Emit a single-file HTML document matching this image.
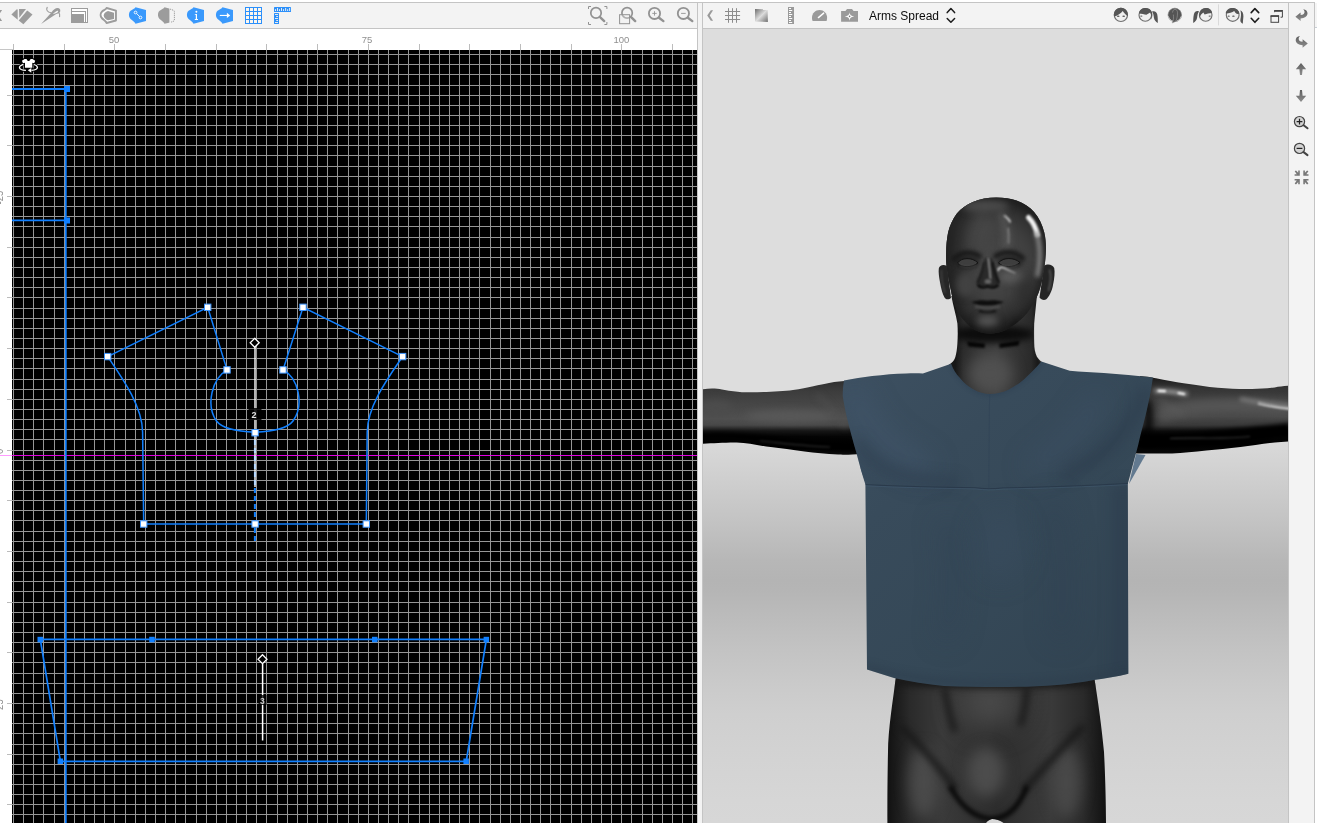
<!DOCTYPE html>
<html><head><meta charset="utf-8"><title>Pattern</title>
<style>
html,body{margin:0;padding:0;background:#fff;overflow:hidden;}
body{width:1317px;height:823px;position:relative;font-family:"Liberation Sans",sans-serif;}
svg{position:absolute;left:0;top:0;display:block;}
text{font-family:"Liberation Sans",sans-serif;}
</style></head>
<body>
<svg width="1317" height="823" viewBox="0 0 1317 823">
<!-- base chrome -->
<rect x="0" y="0" width="1317" height="823" fill="#ffffff"/>
<!-- left toolbar -->
<rect x="0" y="3" width="697" height="25" fill="#f3f3f3"/>
<rect x="0" y="2" width="1315" height="1" fill="#c4c4c4"/>
<rect x="0" y="28" width="697" height="1" fill="#c4c4c4"/>
<!-- rulers -->
<rect x="0" y="49" width="13" height="1" fill="#c6c6c6"/>
<!-- 2D canvas -->
<rect x="12" y="50" width="685" height="773" fill="#000"/>
<g shape-rendering="crispEdges"><path d="M13 50h1v773h-1zM23 50h1v773h-1zM33 50h1v773h-1zM43 50h1v773h-1zM54 50h1v773h-1zM64 50h1v773h-1zM74 50h1v773h-1zM84 50h1v773h-1zM94 50h1v773h-1zM104 50h1v773h-1zM114 50h1v773h-1zM125 50h1v773h-1zM135 50h1v773h-1zM145 50h1v773h-1zM155 50h1v773h-1zM165 50h1v773h-1zM175 50h1v773h-1zM185 50h1v773h-1zM196 50h1v773h-1zM206 50h1v773h-1zM216 50h1v773h-1zM226 50h1v773h-1zM236 50h1v773h-1zM246 50h1v773h-1zM256 50h1v773h-1zM266 50h1v773h-1zM277 50h1v773h-1zM287 50h1v773h-1zM297 50h1v773h-1zM307 50h1v773h-1zM317 50h1v773h-1zM327 50h1v773h-1zM337 50h1v773h-1zM348 50h1v773h-1zM358 50h1v773h-1zM368 50h1v773h-1zM378 50h1v773h-1zM388 50h1v773h-1zM398 50h1v773h-1zM408 50h1v773h-1zM419 50h1v773h-1zM429 50h1v773h-1zM439 50h1v773h-1zM449 50h1v773h-1zM459 50h1v773h-1zM469 50h1v773h-1zM479 50h1v773h-1zM490 50h1v773h-1zM500 50h1v773h-1zM510 50h1v773h-1zM520 50h1v773h-1zM530 50h1v773h-1zM540 50h1v773h-1zM550 50h1v773h-1zM560 50h1v773h-1zM571 50h1v773h-1zM581 50h1v773h-1zM591 50h1v773h-1zM601 50h1v773h-1zM611 50h1v773h-1zM621 50h1v773h-1zM631 50h1v773h-1zM642 50h1v773h-1zM652 50h1v773h-1zM662 50h1v773h-1zM672 50h1v773h-1zM682 50h1v773h-1zM692 50h1v773h-1zM12 54h685v1h-685zM12 64h685v1h-685zM12 74h685v1h-685zM12 85h685v1h-685zM12 95h685v1h-685zM12 105h685v1h-685zM12 115h685v1h-685zM12 125h685v1h-685zM12 135h685v1h-685zM12 145h685v1h-685zM12 155h685v1h-685zM12 166h685v1h-685zM12 176h685v1h-685zM12 186h685v1h-685zM12 196h685v1h-685zM12 206h685v1h-685zM12 216h685v1h-685zM12 226h685v1h-685zM12 237h685v1h-685zM12 247h685v1h-685zM12 257h685v1h-685zM12 267h685v1h-685zM12 277h685v1h-685zM12 287h685v1h-685zM12 297h685v1h-685zM12 308h685v1h-685zM12 318h685v1h-685zM12 328h685v1h-685zM12 338h685v1h-685zM12 348h685v1h-685zM12 358h685v1h-685zM12 368h685v1h-685zM12 379h685v1h-685zM12 389h685v1h-685zM12 399h685v1h-685zM12 409h685v1h-685zM12 419h685v1h-685zM12 429h685v1h-685zM12 439h685v1h-685zM12 450h685v1h-685zM12 460h685v1h-685zM12 470h685v1h-685zM12 480h685v1h-685zM12 490h685v1h-685zM12 500h685v1h-685zM12 510h685v1h-685zM12 520h685v1h-685zM12 531h685v1h-685zM12 541h685v1h-685zM12 551h685v1h-685zM12 561h685v1h-685zM12 571h685v1h-685zM12 581h685v1h-685zM12 591h685v1h-685zM12 602h685v1h-685zM12 612h685v1h-685zM12 622h685v1h-685zM12 632h685v1h-685zM12 642h685v1h-685zM12 652h685v1h-685zM12 662h685v1h-685zM12 673h685v1h-685zM12 683h685v1h-685zM12 693h685v1h-685zM12 703h685v1h-685zM12 713h685v1h-685zM12 723h685v1h-685zM12 733h685v1h-685zM12 744h685v1h-685zM12 754h685v1h-685zM12 764h685v1h-685zM12 774h685v1h-685zM12 784h685v1h-685zM12 794h685v1h-685zM12 804h685v1h-685zM12 814h685v1h-685z" fill="#969696"/><path d="M13 44h1v6h-1zM64 44h1v6h-1zM114 44h1v6h-1zM165 44h1v6h-1zM216 44h1v6h-1zM266 44h1v6h-1zM317 44h1v6h-1zM368 44h1v6h-1zM419 44h1v6h-1zM469 44h1v6h-1zM520 44h1v6h-1zM571 44h1v6h-1zM621 44h1v6h-1zM672 44h1v6h-1zM7 95h5v1h-5zM7 145h5v1h-5zM7 196h5v1h-5zM7 247h5v1h-5zM7 297h5v1h-5zM7 348h5v1h-5zM7 399h5v1h-5zM7 450h5v1h-5zM7 500h5v1h-5zM7 551h5v1h-5zM7 602h5v1h-5zM7 652h5v1h-5zM7 703h5v1h-5zM7 754h5v1h-5zM7 804h5v1h-5z" fill="#bcbcbc"/></g>
<g id="pattern" fill="none" stroke="#1180ff" stroke-width="1.5">
<!-- magenta guide -->
<rect x="0" y="455" width="12" height="1" fill="#ff9cff" stroke="none"/>
<rect x="12" y="455" width="685" height="1" fill="#e000e0" stroke="none"/>
<!-- avatar rotate icon -->
<g stroke="none">
<g stroke="#000" stroke-width="2.2" stroke-linejoin="round" fill="#000">
<path d="M24.6 58.9L26.6 58.9C27 60.3 27.8 61 28.5 61C29.300 61 30.100 60.300 30.500 58.900L32.500 58.900L35.200 60.800L34.200 63.300L32.300 62.700L32.300 67.800L25 67.800L25 62.700L23 63.300L21.900 60.800Z"/>
<path d="M23.200 64.400C20.500 65.400 19.300 66.700 19.500 67.800C19.900 69.300 22.600 70.200 25.900 70.400M31.500 70.300C34.800 70 37.400 68.900 37.400 67.400C37.400 66.300 36.200 65.300 34 64.500" fill="none" stroke-width="3.2"/>
<path d="M28 70.300L31.200 68.200L31.200 72.600Z"/>
</g>
<path d="M24.6 58.9L26.6 58.9C27 60.3 27.8 61 28.5 61C29.300 61 30.100 60.300 30.500 58.900L32.500 58.900L35.200 60.800L34.200 63.300L32.300 62.700L32.300 67.800L25 67.800L25 62.700L23 63.300L21.900 60.800Z" fill="#fff"/>
<path d="M23.200 64.400C20.500 65.400 19.300 66.700 19.500 67.800C19.900 69.300 22.600 70.200 25.900 70.400M31.500 70.300C34.800 70 37.400 68.900 37.400 67.400C37.400 66.300 36.200 65.300 34 64.500" fill="none" stroke="#fff" stroke-width="1.300"/>
<path d="M27.800 70.300L31.300 68L31.300 72.700Z" fill="#fff"/>
</g>
<!-- big left piece (partial) -->
<path d="M65.8 89V823" stroke-width="1.8"/>
<path d="M12 89H66M12 220.4H66" stroke-width="1.8"/>
<rect x="64" y="86" width="6" height="6" fill="#1180ff" stroke="none"/>
<rect x="64" y="217.5" width="6" height="6" fill="#1180ff" stroke="none"/>
<!-- front bodice -->
<path d="M107.7 356.6L207.7 307.3L227 369.9M283 369.9L303 307.3L402.6 356.6"/>
<path d="M107.7 356.6C122.3 378 142.3 406 142.6 432L143.7 524H366.3L367.2 432C367.5 406 388 378 402.6 356.6"/>
<path d="M227.4 369.8C212 378 205.5 405 216.5 421C222 428.5 238 431.5 255.3 432.3C272 431.5 287.5 428.5 293 421C304.5 405 298.5 378 283.2 369.8"/>
<!-- grain line of bodice -->
<path d="M254.9 432V541" stroke-dasharray="5 3" stroke-width="2"/>
<path d="M255 347V487" stroke="#ffffff" stroke-width="1.4"/>
<path d="M254.7 338.3L259.2 342.8L254.7 347.3L250.2 342.8Z" stroke="#ffffff" stroke-width="1.3" fill="#000"/>
<rect x="248.5" y="408" width="13" height="12" fill="#000" fill-opacity="0.85" stroke="none"/>
<text x="254" y="418" font-size="9" font-weight="bold" fill="#e8e8e8" stroke="none" text-anchor="middle" opacity="0.99">2</text>
<g fill="#ffffff" stroke="#3f97ff" stroke-width="1">
<rect x="204.5" y="304.1" width="6.4" height="6.4"/>
<rect x="299.8" y="304.1" width="6.4" height="6.4"/>
<rect x="104.5" y="353.4" width="6.4" height="6.4"/>
<rect x="399.4" y="353.4" width="6.4" height="6.4"/>
<rect x="223.8" y="366.7" width="6.4" height="6.4"/>
<rect x="279.8" y="366.7" width="6.4" height="6.4"/>
<rect x="251.9" y="429.5" width="6.4" height="6.4"/>
<rect x="140.5" y="520.8" width="6.4" height="6.4"/>
<rect x="251.9" y="520.8" width="6.4" height="6.4"/>
<rect x="363.1" y="520.8" width="6.4" height="6.4"/>
</g>
<!-- lower band piece -->
<path d="M40.3 639.3H486.4L466.2 761.3H60.4Z" stroke-width="1.7"/>
<g fill="#1180ff" stroke="none">
<rect x="37.5" y="636.8" width="5.5" height="5.5"/>
<rect x="149.2" y="636.8" width="5.5" height="5.5"/>
<rect x="372" y="636.8" width="5.5" height="5.5"/>
<rect x="483.6" y="636.8" width="5.5" height="5.5"/>
<rect x="57.6" y="758.5" width="5.5" height="5.5"/>
<rect x="463.4" y="758.5" width="5.5" height="5.5"/>
</g>
<path d="M262.6 663.5V740.5" stroke="#ffffff" stroke-width="1.5"/>
<path d="M262.5 654.7L267 659.2L262.5 663.7L258 659.2Z" stroke="#ffffff" stroke-width="1.3" fill="#000"/>
<rect x="258.5" y="695" width="8" height="10" fill="#000" fill-opacity="0.75" stroke="none"/>
<text x="262.4" y="703.5" font-size="8.5" font-weight="bold" fill="#cfcfcf" stroke="none" text-anchor="middle" opacity="0.99">3</text>
</g>

<!-- ruler labels -->
<g font-size="9.5" fill="#8e8e8e" text-anchor="middle" opacity="0.99">
<text transform="translate(114,43.2) scale(1,1.05)">50</text><text transform="translate(367,43.2) scale(1,1.05)">75</text><text transform="translate(621.4,43.2) scale(1,1.05)">100</text>
<text transform="translate(3,197.6) rotate(-90) scale(1,1.1)">-25</text><text transform="translate(3,451.3) rotate(-90) scale(1,1.1)">0</text><text transform="translate(3,704.6) rotate(-90) scale(1,1.1)">25</text>
</g>
<!-- divider -->
<rect x="697" y="3" width="1" height="820" fill="#c4c4c4"/>
<rect x="698" y="3" width="4" height="820" fill="#f3f3f3"/>
<rect x="702" y="3" width="1" height="820" fill="#c4c4c4"/>
<!-- right toolbar -->
<rect x="703" y="3" width="585" height="25" fill="#f3f3f3"/>
<rect x="703" y="28" width="585" height="1" fill="#c4c4c4"/>
<!-- 3D view -->
<defs>
<linearGradient id="bg3d" x1="0" y1="29" x2="0" y2="823" gradientUnits="userSpaceOnUse">
<stop offset="0.0000" stop-color="#dddddd"/><stop offset="0.4987" stop-color="#dddddd"/><stop offset="0.5302" stop-color="#d7d7d7"/><stop offset="0.5617" stop-color="#d0d0d0"/><stop offset="0.5932" stop-color="#c9c9c9"/><stop offset="0.6247" stop-color="#c2c2c2"/><stop offset="0.6688" stop-color="#b7b7b7"/><stop offset="0.6940" stop-color="#b4b4b4"/><stop offset="0.7065" stop-color="#b5b5b5"/><stop offset="0.7380" stop-color="#bbbbbb"/><stop offset="0.7821" stop-color="#c3c3c3"/><stop offset="0.8325" stop-color="#cbcbcb"/><stop offset="0.8640" stop-color="#cfcfcf"/><stop offset="0.9207" stop-color="#d3d3d3"/><stop offset="0.9710" stop-color="#d6d6d6"/><stop offset="1.0000" stop-color="#d7d7d7"/>
</linearGradient>
</defs>
<rect x="703" y="29" width="585" height="794" fill="url(#bg3d)"/>
<g id="avatar" clip-path="url(#vp3d)">
<defs>
<clipPath id="vp3d"><rect x="703" y="29" width="585" height="794"/></clipPath>
<filter id="b1" color-interpolation-filters="sRGB" filterUnits="userSpaceOnUse" x="690" y="20" width="620" height="820"><feGaussianBlur stdDeviation="1"/></filter>
<filter id="b2" color-interpolation-filters="sRGB" filterUnits="userSpaceOnUse" x="690" y="20" width="620" height="820"><feGaussianBlur stdDeviation="2"/></filter>
<filter id="b3" color-interpolation-filters="sRGB" filterUnits="userSpaceOnUse" x="690" y="20" width="620" height="820"><feGaussianBlur stdDeviation="3.5"/></filter>
<filter id="b6" color-interpolation-filters="sRGB" filterUnits="userSpaceOnUse" x="690" y="20" width="620" height="820"><feGaussianBlur stdDeviation="7"/></filter>
<filter id="b12" color-interpolation-filters="sRGB" filterUnits="userSpaceOnUse" x="690" y="20" width="620" height="820"><feGaussianBlur stdDeviation="14"/></filter>
<linearGradient id="armL" x1="0" y1="382" x2="0" y2="455" gradientUnits="userSpaceOnUse">
<stop offset="0" stop-color="#303030"/><stop offset="0.12" stop-color="#3c3c3c"/><stop offset="0.3" stop-color="#464646"/><stop offset="0.5" stop-color="#505050"/><stop offset="0.59" stop-color="#484848"/><stop offset="0.67" stop-color="#161616"/><stop offset="0.75" stop-color="#040404"/><stop offset="0.9" stop-color="#000"/><stop offset="1" stop-color="#0e0e0e"/>
</linearGradient>
<linearGradient id="armR" x1="0" y1="378" x2="0" y2="455" gradientUnits="userSpaceOnUse">
<stop offset="0" stop-color="#1c1c1c"/><stop offset="0.12" stop-color="#343434"/><stop offset="0.3" stop-color="#404040"/><stop offset="0.5" stop-color="#484848"/><stop offset="0.61" stop-color="#3a3a3a"/><stop offset="0.69" stop-color="#0e0e0e"/><stop offset="0.85" stop-color="#000"/><stop offset="1" stop-color="#0a0a0a"/>
</linearGradient>
<linearGradient id="legG" x1="888" y1="0" x2="1105" y2="0" gradientUnits="userSpaceOnUse">
<stop offset="0" stop-color="#121212"/><stop offset="0.1" stop-color="#2a2a2a"/><stop offset="0.25" stop-color="#3a3a3a"/><stop offset="0.5" stop-color="#2c2c2c"/><stop offset="0.75" stop-color="#3a3a3a"/><stop offset="0.9" stop-color="#2a2a2a"/><stop offset="1" stop-color="#121212"/>
</linearGradient>
<radialGradient id="headG" cx="992" cy="262" r="62" gradientUnits="userSpaceOnUse">
<stop offset="0" stop-color="#484848"/><stop offset="0.6" stop-color="#404040"/><stop offset="0.88" stop-color="#303030"/><stop offset="1" stop-color="#222"/>
</radialGradient>
<linearGradient id="neckG" x1="952" y1="0" x2="1040" y2="0" gradientUnits="userSpaceOnUse">
<stop offset="0.04" stop-color="#181818"/><stop offset="0.13" stop-color="#2c2c2c"/><stop offset="0.3" stop-color="#363636"/><stop offset="0.5" stop-color="#404040"/><stop offset="0.75" stop-color="#333"/><stop offset="0.9" stop-color="#2a2a2a"/><stop offset="0.97" stop-color="#1a1a1a"/>
</linearGradient>
<linearGradient id="shirtG" x1="845" y1="370" x2="1130" y2="690" gradientUnits="userSpaceOnUse">
<stop offset="0" stop-color="#3d5061"/><stop offset="0.3" stop-color="#384b5b"/><stop offset="0.65" stop-color="#354857"/><stop offset="1" stop-color="#314351"/>
</linearGradient>
</defs>
<!-- legs / hips -->
<g>
<path id="hips" d="M896 676C893 700 888 730 888 752C887.400 780 887.400 800 887.400 823H986C988 820.500 990 819.300 992 819C996 819 1000 820.500 1003.600 823H1106C1106 800 1105 770 1104 752C1102 730 1098 700 1094 676Z" fill="url(#legG)"/>
<clipPath id="hipsC"><use href="#hips"/></clipPath>
<g clip-path="url(#hipsC)">
<ellipse cx="990" cy="702" rx="30" ry="26" fill="#4a4a4a" filter="url(#b12)"/>
<ellipse cx="924" cy="782" rx="15" ry="36" fill="#4a4a4a" filter="url(#b6)"/>
<ellipse cx="1066" cy="782" rx="15" ry="36" fill="#484848" filter="url(#b6)"/>
<path d="M944 688C947 704 950 718 955 732M1027 688C1026 704 1024 715 1020 726" fill="none" stroke="#1a1a1a" stroke-width="6" filter="url(#b3)"/>
<path d="M900 726C920 744 940 768 956 790M1084 726C1064 744 1044 768 1024 790" fill="none" stroke="#181818" stroke-width="6" filter="url(#b3)"/>
<ellipse cx="986" cy="772" rx="19" ry="25" fill="#4c4c4c" filter="url(#b6)"/>
<path d="M950 786C958 802 972 818 992 819C1010 818 1021 802 1027 786" fill="none" stroke="#070707" stroke-width="5" filter="url(#b2)"/>
<ellipse cx="996" cy="682" rx="110" ry="6" fill="#161616" filter="url(#b3)"/>
</g>
</g>
<!-- left arm -->
<g>
<path id="armLp" d="M700 389.600C708 388.300 716 388.300 722 389.500C732 391.500 742 392.500 750 392.300C766 392 782 391.500 793 390C808 387.500 820 384.500 829 382.900C836 381.600 842 381 850 381L862 454C850 455 842 454.800 838 454.600C826 454 815 452.800 804.500 451.600C792 450 781 448.300 770.700 447.100C758 445.500 748 443 736.800 442.600C722 442.500 712 443.700 700 443.700Z" fill="url(#armL)"/>
<clipPath id="armLc"><use href="#armLp"/></clipPath>
<g clip-path="url(#armLc)">
<ellipse cx="716" cy="408" rx="16" ry="8" fill="#4c4c4c" filter="url(#b3)"/>
<ellipse cx="790" cy="416" rx="45" ry="6" fill="#585858" filter="url(#b3)"/>
<path d="M816 394C828 404 838 414 846 428" stroke="#555" stroke-width="3" fill="none" filter="url(#b3)" opacity="0.7"/>
<path d="M700 436C730 434 760 438 790 442C815 445 840 447 860 447" stroke="#000" stroke-width="6" fill="none" filter="url(#b2)"/>
<path d="M760 441C790 444 810 446.500 830 447" stroke="#2a2a2a" stroke-width="1.200" fill="none" filter="url(#b1)"/>
</g>
</g>
<!-- right arm -->
<g>
<path id="armRp" d="M1140 376C1146 376.500 1150 377 1156 378.300C1166 380.300 1175 382 1183.600 383.300C1196 385.200 1207 386.800 1217.800 387.800C1230 388.800 1242 389.300 1252 389C1260 388.600 1268 388 1274.700 387.400C1280 386.600 1285 386 1292 385.600V441.400C1286 441.600 1280 442 1274.700 442.500C1262 444 1251 445.800 1240.600 447.100C1228 448.600 1217 449.800 1206.400 450.500C1194 451.800 1183 453.200 1172.200 453.400C1160 453.800 1148 453.500 1130 453.200Z" fill="url(#armR)"/>
<clipPath id="armRc"><use href="#armRp"/></clipPath>
<g clip-path="url(#armRc)">
<path d="M1160 414C1190 405 1230 404 1290 408" stroke="#545454" stroke-width="15" fill="none" filter="url(#b3)"/>
<path d="M1146 400C1150 412 1150 424 1146 440" stroke="#050505" stroke-width="8" fill="none" filter="url(#b3)"/>
<path d="M1156 391C1166 390.500 1176 392 1186 394" stroke="#a0a0a0" stroke-width="4" fill="none" filter="url(#b2)" stroke-linecap="round"/><path d="M1158.500 390.800L1165 391.200M1178.500 393L1184 394" stroke="#fff" stroke-width="2.200" fill="none" filter="url(#b1)" stroke-linecap="round"/>
<path d="M1160 398C1164 404 1172 410 1184 414" stroke="#5c5c5c" stroke-width="3" fill="none" filter="url(#b3)"/>
<path d="M1258 403C1268 405.500 1278 407.500 1290 408.500" stroke="#fff" stroke-width="2.400" fill="none" filter="url(#b1)"/>
<path d="M1240 399C1256 402 1272 405 1290 406" stroke="#7a7a7a" stroke-width="4" fill="none" filter="url(#b2)"/>
<path d="M1140 440C1180 441 1220 438 1290 430" stroke="#000" stroke-width="14" fill="none" filter="url(#b2)"/>
<path d="M1170 438.500C1200 437.500 1225 439.500 1250 436.500" stroke="#333" stroke-width="1.200" fill="none" filter="url(#b1)"/>
</g>
</g>
<!-- neck -->
<g>
<path id="neckP" d="M951.4 296C953 305 956 315 957.4 323.4C958 330 958 337 957.4 343.4C957 349 956.400 353 955.4 356.8C954.400 360 953 363 944 368L960 392C975 400 1005 400 1020 392L1052 367C1044 365.500 1039 360 1036.9 356.8C1035 352 1034.2 348 1034.2 343.4C1034 337 1034 330 1034.2 323.4C1035 315 1036 305 1036.9 296Z" fill="url(#neckG)"/>
<clipPath id="neckC"><use href="#neckP"/></clipPath>
<g clip-path="url(#neckC)">
<ellipse cx="990" cy="374" rx="22" ry="20" fill="#505050" filter="url(#b6)"/>
<ellipse cx="993" cy="334" rx="42" ry="9" fill="#0c0c0c" filter="url(#b3)"/>
<path d="M967 341.500L985 343.500L984.500 348L968.500 346.500ZM999.500 343.500L1019.500 340.500L1018.500 345.500L999.500 348Z" fill="#060606" filter="url(#b1)"/>
<path d="M1035 330C1035.500 345 1037 355 1042 362" stroke="#4a4a4a" stroke-width="1.600" fill="none" filter="url(#b1)"/>
</g>
</g>
<!-- head -->
<g>
<!-- ears -->
<path d="M947 266C943.500 264 939.500 265 938.800 268.500C938.400 272 939 277 940 282C941 288 942.500 294 944.500 297.500C946 299.800 949 300 951 298Z" fill="#262626"/>
<path d="M1044 266C1047.500 263.500 1052.500 264.500 1054.200 268C1055 272 1054.500 278 1053 285C1052 291 1049 297 1046 299.500C1043.500 300.500 1041 299.500 1039.500 297.500Z" fill="#242424"/>
<path d="M1049.500 269.500C1051.500 275 1051 282 1048.500 291" stroke="#5c5c5c" stroke-width="1.500" fill="none" filter="url(#b1)"/>
<path d="M941.500 270C941 277 942 284 945 293" stroke="#444" stroke-width="1.500" fill="none" filter="url(#b1)"/>
<path id="headP" d="M996.200 197.500C1004 197.500 1011 198.500 1016.600 200.400C1024 203 1030 207 1034.100 212.100C1039 218 1042.500 225 1044.300 232.500C1045.800 239 1046.200 246 1045.800 252.900C1045.500 260 1044.500 268 1043 276C1041.500 284 1039.500 291 1037 296.600C1034.500 302 1031.500 307 1028.300 311.200C1025 315.500 1021 319.500 1016.600 322.900C1012 326.500 1007 329.500 1002 331.600C997 333.300 992 333.900 987.500 333.600C982 333 977 331.200 972.900 328.700C968.500 325.500 964.500 321.500 961.200 317C958 312.500 955.500 307.500 953.900 302.400C952.500 298 951.500 294 951 290.800C949.500 284 947.800 276 946.600 267.500C946 262 945.900 257 946.100 252.900C946.200 246 946.800 239 948.100 232.500C949.800 225.500 952.800 219 956.900 213.500C961 208.500 966.500 204.500 972.900 201.900C980 199 988 197.500 996.200 197.500Z" fill="url(#headG)"/>
<clipPath id="headC"><use href="#headP"/></clipPath>
<g clip-path="url(#headC)">
<!-- edge darkening -->
<use href="#headP" fill="none" stroke="#1e1e1e" stroke-width="7" filter="url(#b3)"/>
<!-- jaw/neck shadow at bottom -->
<path d="M968 326C975 333 983 336 990 336C999 336 1010 331 1018 322" stroke="#141414" stroke-width="5" fill="none" filter="url(#b2)"/>
<!-- forehead highlights -->
<path d="M1028.500 217.500C1033 222 1036 228 1037.500 235" stroke="#f2f2f2" stroke-width="5" fill="none" filter="url(#b1)" stroke-linecap="round"/>
<path d="M1036 232C1039 240 1040.500 250 1039.500 262C1039 268 1038 273 1037 277" stroke="#8c8c8c" stroke-width="4" fill="none" filter="url(#b2)"/>
<path d="M1004.500 216C1006.500 217.500 1008.500 219.500 1009.800 221.500" stroke="#f0f0f0" stroke-width="2.200" fill="none" filter="url(#b1)" stroke-linecap="round"/>
<path d="M1007.800 228C1008.600 233 1008.600 238 1008.300 243.500" stroke="#b4b4b4" stroke-width="1.800" fill="none" filter="url(#b1)"/>
<path d="M1000 212C1006 224 1008 236 1006 250" stroke="#555" stroke-width="7" fill="none" filter="url(#b3)"/>
<ellipse cx="975" cy="228" rx="20" ry="18" fill="#464646" filter="url(#b6)"/>
<path d="M970 203C958 214 951 234 952 256C953 274 956 292 960 306" stroke="#202020" stroke-width="22" fill="none" filter="url(#b6)" opacity="0.75"/>
<!-- brows / eye sockets -->
<path d="M953 261C960 251.500 972 250.500 981 257.500M994 257.500C1003 250.500 1016 250.500 1024 260" stroke="#161616" stroke-width="5" fill="none" filter="url(#b2)"/>
<ellipse cx="967" cy="262.500" rx="12" ry="6.500" fill="#202020" filter="url(#b2)"/>
<ellipse cx="1009.500" cy="262.500" rx="12" ry="6.500" fill="#202020" filter="url(#b2)"/>
<path d="M957.500 263C961.500 257.300 972 257 978 262.800C972 268 961.500 267.800 957.500 263Z" fill="#3e3e3e" stroke="#141414" stroke-width="1"/>
<path d="M960 265C964 267.600 971 267.800 976 264.800" stroke="#5a5a5a" stroke-width="0.900" fill="none" filter="url(#b1)"/>
<path d="M998.500 262.800C1003.500 257 1014 257.300 1020 262.500C1014 267.800 1003.500 268 998.500 262.800Z" fill="#3e3e3e" stroke="#141414" stroke-width="1"/>
<path d="M1001 265C1006 267.800 1013 267.600 1018 264.600" stroke="#5a5a5a" stroke-width="0.900" fill="none" filter="url(#b1)"/>
<!-- cheek highlight -->
<path d="M998 271C998.500 267.500 1001 266.500 1004 268C1009 270.500 1013 272.500 1015.500 274" stroke="#d8d8d8" stroke-width="1.800" fill="none" filter="url(#b1)"/>
<ellipse cx="1012" cy="277" rx="12" ry="6" fill="#5c5c5c" filter="url(#b3)"/>
<ellipse cx="1026" cy="292" rx="8" ry="18" fill="#2a2a2a" filter="url(#b6)" opacity="0.800"/>
<ellipse cx="966" cy="285" rx="10" ry="12" fill="#424242" filter="url(#b3)"/>
<!-- nose -->
<path d="M984.500 258C983.500 266 980.500 274 977 281C976 284.500 978.500 287.500 983 287.500L987.500 286.500L993 287.800C997.500 287.800 999.500 284.500 998.500 281C996 274 993.500 266 992.500 258Z" fill="#2a2a2a" filter="url(#b1)"/>
<path d="M992.500 262C993.500 270 996 277 999 283" stroke="#141414" stroke-width="2.500" fill="none" filter="url(#b1)"/>
<path d="M984 262C983 270 980.500 277 977.500 283" stroke="#1c1c1c" stroke-width="2" fill="none" filter="url(#b1)"/>
<path d="M988.300 258C989.300 266 990 273 990.500 279" stroke="#9a9a9a" stroke-width="1.600" fill="none" filter="url(#b1)"/>
<ellipse cx="988" cy="281.500" rx="3.500" ry="2.500" fill="#646464" filter="url(#b1)"/>
<path d="M977.500 285C981 288.500 985.500 287.800 987.500 286.300C989.500 287.800 994.500 288.500 998.500 285" stroke="#050505" stroke-width="2" fill="none" filter="url(#b1)"/>
<!-- mouth -->
<path d="M971.400 302C978 300.300 983 299.800 987.500 300.800C992 299.800 997 300.300 1004 302C998 305 992 305.500 987.500 305.500C982 305.500 976 305 971.400 302Z" fill="#0e0e0e" filter="url(#b1)"/>
<path d="M975 306.500C982 308.500 993 308.500 1000 306.500" stroke="#4c4c4c" stroke-width="2.400" fill="none" filter="url(#b1)"/>
<path d="M979 311C984 313 991 313 996 311" stroke="#141414" stroke-width="2.600" fill="none" filter="url(#b1)"/>
<ellipse cx="987.500" cy="321" rx="11" ry="5" fill="#565656" filter="url(#b3)"/>
<!-- top of head sheen -->
<ellipse cx="985" cy="206" rx="24" ry="6" fill="#4a4a4a" filter="url(#b3)"/>
</g>
</g>
<!-- shirt back flap (light) -->
<path d="M1136 454L1145.500 455L1129 484Z" fill="#62798f"/>
<path d="M858 452L861 470L866 484L864 455Z" fill="#5c7189"/>
<!-- shirt -->
<g>
<path id="shirtP" d="M844 380.600C853 378.800 863 377.300 872.200 376.100C884 374.600 895 373.600 906 373.400C912 373.300 918 373.300 922.900 373.400L951.100 363.700C953 369 956 374 960.100 378.300C964 383 968.500 387 973.600 389.600C978.500 392.500 984 394 989.400 394.100C996 394.300 1003 392.500 1009 389.500C1016 386 1022 381.500 1027 376.500C1032 372 1037 367 1041.300 361.600L1069.700 370.800C1081 372 1092 372.500 1103.900 373C1120 374 1137 375.800 1152.900 377.600C1151.500 388 1149.500 398 1147.200 408.300C1145 418 1142.700 427 1140.300 435.700C1139 442 1137.500 448 1135.800 453.900C1133 464 1130.500 474 1127.800 483.500L1128.300 673.800C1117 676.500 1106 678.500 1094 680C1081 682.500 1069 684 1056.700 685C1038 686.500 1019 687 1000 687C981 687 962 686.800 944 686C927 684.500 910 681.500 894 678C885 675.500 876 672.500 867 669.600L865.400 484.400C862 474 859 463 856.400 452.800C853 441 850 430 847.300 418.900C845.500 411 844 404 842.800 396.400C842.600 391 843 386 844 380.600Z" fill="url(#shirtG)"/>
<clipPath id="shirtC"><use href="#shirtP"/></clipPath>
<g clip-path="url(#shirtC)">
<!-- soft folds -->
<path d="M850 388C862 420 880 450 930 470" stroke="#42566b" stroke-width="20" fill="none" filter="url(#b12)" opacity="0.800"/>
<path d="M858 440C872 468 900 481 960 483" stroke="#2d3d4e" stroke-width="9" fill="none" filter="url(#b6)" opacity="0.700"/>
<path d="M1147 388C1136 420 1114 455 1062 475" stroke="#2c3b4b" stroke-width="12" fill="none" filter="url(#b6)" opacity="0.600"/>
<path d="M1100 395C1085 425 1060 450 1030 470" stroke="#3f5267" stroke-width="14" fill="none" filter="url(#b12)" opacity="0.700"/>
<ellipse cx="1000" cy="545" rx="24" ry="36" fill="#3c4f63" filter="url(#b12)" opacity="0.350"/>
<path d="M945 520C955 560 955 600 945 640" stroke="#314253" stroke-width="14" fill="none" filter="url(#b12)" opacity="0.600"/>
<path d="M1050 500C1062 540 1066 580 1060 640" stroke="#2f4051" stroke-width="16" fill="none" filter="url(#b12)" opacity="0.600"/>
<rect x="1112" y="484" width="22" height="196" fill="#2d3d4e" filter="url(#b6)" opacity="0.600"/>
<path d="M866 666C900 677 950 683 1000 684C1050 684 1100 677 1130 670" stroke="#2c3b4b" stroke-width="5" fill="none" filter="url(#b3)" opacity="0.500"/>
<!-- collar shading -->
<path d="M951 364C958 380 975 394 990 394C1008 394 1030 376 1041 362" stroke="#2c3e51" stroke-width="3" fill="none" filter="url(#b2)" opacity="0.700"/>
<!-- seams -->
<path d="M865.400 484.600C900 486.400 940 487.300 975 487.700C985 489 993 489 1003 487.900C1040 487.300 1090 485.600 1128 483.400" stroke="#2a3a4b" stroke-width="1" fill="none"/>
<path d="M866 485.800C900 487.600 940 488.400 975 488.900C985 490.200 993 490.200 1003 489.100C1040 488.400 1090 486.800 1128 484.600" stroke="#52708f" stroke-width="0.800" fill="none" opacity="0.300"/>
<path d="M989.600 394C989.300 420 989 460 988.800 488" stroke="#2f4256" stroke-width="0.900" fill="none" opacity="0.550"/>
</g>
</g>
</g>

<!-- side toolbar -->
<rect x="1288" y="3" width="1" height="820" fill="#c4c4c4"/>
<rect x="1289" y="3" width="25" height="820" fill="#f3f3f3"/>
<rect x="1314" y="3" width="1" height="820" fill="#c4c4c4"/>
<rect x="1315" y="3" width="2" height="24" fill="#f5f5f5"/>
<rect x="1315" y="27" width="2" height="1" fill="#c9cfd6"/>
<g id="ltools">
<!-- clipped chevron at far left -->
<path d="M-1 9.9H2.1L-1 14.9ZM-1 16.1L2.1 21H-1Z" fill="#9a9a9a"/>
<!-- pattern pieces -->
<g fill="#9c9c9c">
<path d="M11.4 14.4L16.8 9.2L17.7 9.6V19.7Z"/>
<path d="M19 9H26L19.3 17.7Z"/>
<path d="M27.2 10.4L32.5 14.4L23.4 24.3L18.7 20.4Z"/>
</g>
<!-- needle -->
<path fill-rule="evenodd" fill="#9c9c9c" d="M41.1 23.9L51.6 12.2C53.2 9.8 55.4 8.2 57.6 8.1C59.6 8.1 60.7 9.7 60.2 11.4C59.8 12.5 59 13.1 58 13.5L56.2 13.9ZM52.8 14.2C54.4 12.3 56 11.1 57.3 10.7C58.2 10.5 58.5 11.2 57.9 11.9C57 12.8 55 13.6 52.8 14.2Z"/>
<g fill="none" stroke="#9c9c9c" stroke-width="1.15" stroke-linecap="round"><path d="M47.2 7.4C45.7 9.8 47.4 12.1 51.2 12.8"/><path d="M58.6 12.4C59.7 13.3 59.9 14.8 59.6 16.6"/></g>
<!-- layers -->
<rect x="71.5" y="8.5" width="16" height="14" fill="#fff" stroke="#9c9c9c"/>
<rect x="71.5" y="11.5" width="14" height="11" fill="#fff" stroke="#9c9c9c"/>
<rect x="71" y="14" width="13" height="9" fill="#9c9c9c"/>
<!-- garment outline (grey) -->
<path d="M106.6 8L115.9 10.6V20.5L106.6 23C106 21 103.4 19.8 102 18.3C100.2 16.3 100.2 13.4 102 11.6C103.4 10.2 106 9.6 106.6 8Z" fill="#fff" stroke="#9c9c9c" stroke-width="2" stroke-linejoin="round"/>
<path d="M108 11.1L114 12.7V18.9L108 20.2C105.5 19.3 103.7 17.5 103.7 15.4C103.7 13.4 105.5 11.9 108 11.1Z" fill="#9c9c9c"/>
<!-- blue garment shapes -->
<defs><path id="gshape" d="M6.5 0.2L17 3V14.1L6.5 16.8C6 14.6 3 13.4 1.6 11.9C-0.6 9.6 -0.6 5.8 1.6 3.7C3 2.4 6 1.8 6.5 0.2Z"/></defs>
<use href="#gshape" x="129" y="7" fill="#3a99fc"/>
<g stroke="#fff" stroke-width="0.9" fill="none"><circle cx="135.55" cy="12.5" r="1.35"/><circle cx="140.5" cy="17.5" r="1.35"/><path d="M136.6 13.5L139.5 16.5"/></g>
<!-- grey half garment with dotted half -->
<clipPath id="halfclip"><rect x="150" y="0" width="19.4" height="30"/></clipPath>
<g clip-path="url(#halfclip)"><use href="#gshape" x="158" y="7" fill="#9c9c9c"/></g>
<path d="M170.3 9.2L173.2 10.2C174.2 10.6 174.4 11 174.4 12V19.6C174.4 20.6 174.2 21 173.2 21.4L170.3 22.4" fill="none" stroke="#6f6f6f" stroke-width="0.9" stroke-dasharray="0.9 1.15"/>
<use href="#gshape" x="187" y="7" fill="#3a99fc"/>
<g fill="#fff"><circle cx="196.4" cy="11.7" r="1"/><path d="M194.8 13.9H197V19H198V19.9H194.8V19H195.8V14.8H194.8Z"/></g>
<use href="#gshape" x="216" y="7" fill="#3a99fc"/>
<path d="M219.8 15.45H227.5" stroke="#fff" stroke-width="1.1"/><path d="M226.9 12.8L230.2 15.45L226.9 18.1Z" fill="#fff"/>
<!-- grid icon -->
<rect x="245" y="7" width="17" height="17" fill="#2c90fb"/>
<g fill="#fdf7ee">
<rect x="246" y="8" width="3" height="3"/><rect x="250" y="8" width="3" height="3"/><rect x="254" y="8" width="3" height="3"/><rect x="258" y="8" width="3" height="3"/>
<rect x="246" y="12" width="3" height="3"/><rect x="250" y="12" width="3" height="3"/><rect x="254" y="12" width="3" height="3"/><rect x="258" y="12" width="3" height="3"/>
<rect x="246" y="16" width="3" height="3"/><rect x="250" y="16" width="3" height="3"/><rect x="254" y="16" width="3" height="3"/><rect x="258" y="16" width="3" height="3"/>
<rect x="246" y="20" width="3" height="3"/><rect x="250" y="20" width="3" height="3"/><rect x="254" y="20" width="3" height="3"/><rect x="258" y="20" width="3" height="3"/>
</g>
<!-- ruler icon -->
<rect x="274" y="7" width="17" height="5" rx="0.6" fill="#2c90fb"/>
<rect x="274" y="13" width="5" height="11" rx="0.6" fill="#2c90fb"/>
<g fill="#fdf7ee">
<rect x="275.1" y="9.2" width="0.9" height="1.8"/><rect x="277" y="8" width="0.9" height="3"/><rect x="279.1" y="9.2" width="0.9" height="1.8"/><rect x="281.1" y="8" width="0.9" height="3"/><rect x="283.1" y="9.2" width="0.9" height="1.8"/><rect x="285.2" y="8" width="0.9" height="3"/><rect x="287.2" y="9.2" width="0.9" height="1.8"/><rect x="289.2" y="8" width="0.9" height="3"/>
<rect x="275" y="14" width="3" height="0.9"/><rect x="276.2" y="16" width="1.8" height="0.9"/><rect x="275" y="18" width="3" height="0.9"/><rect x="276.2" y="20" width="1.8" height="0.9"/><rect x="275" y="22" width="3" height="0.9"/>
</g>
<!-- zoom icons -->
<g fill="none" stroke="#929292">
<path d="M588.5 9V6.5H591M604.4 6.5H606.9V9M588.5 22V24.5H591M604.4 24.5H606.9V22" stroke-width="1"/>
<circle cx="596" cy="12.9" r="5.2" stroke-width="1.7"/>
<path d="M600.3 17.3L604.2 21.1" stroke-width="2.4" stroke-linecap="round"/>
<circle cx="627.1" cy="12.9" r="5.2" stroke-width="1.7"/>
<path d="M631.4 17.3L635.2 21.1" stroke-width="2.4" stroke-linecap="round"/>
<rect x="619.6" y="14.7" width="10" height="9" stroke-width="1" fill="#f3f3f3" fill-opacity="0.3"/>
<circle cx="654.5" cy="13.4" r="5.6" stroke-width="1.8"/>
<path d="M659 17.8L663.4 21.1" stroke-width="2.4" stroke-linecap="round"/>
<path d="M652.3 13.4H656.7M654.5 11.2V15.6" stroke-width="0.9"/>
<circle cx="683.4" cy="13.4" r="5.6" stroke-width="1.8"/>
<path d="M687.9 17.8L692.3 21.1" stroke-width="2.4" stroke-linecap="round"/>
<path d="M681.1 13.4H685.7" stroke-width="0.9"/>
</g>
</g>

<g id="rtools">
<path d="M710.8 10.2H713.1L709.7 15.5L713.1 20.8H710.8L707.2 15.5Z" fill="#9a9a9a"/>
<path d="M728.5 8.2V22.8M732.5 8.2V22.8M736.5 8.2V22.8M725 11.5H740.1M725 15.5H740.1M725 19.5H740.1" stroke="#8c8c8c" stroke-width="1" fill="none"/>
<defs>
<linearGradient id="sqg" x1="0" y1="0" x2="1" y2="1"><stop offset="0" stop-color="#6e6e6e"/><stop offset="0.5" stop-color="#dcdcdc"/><stop offset="1" stop-color="#707070"/></linearGradient>
</defs>
<path d="M755 9.1L767.6 9.3L767.9 21.9L755 21.5Z" fill="url(#sqg)"/>
<!-- vertical ruler -->
<rect x="788" y="7" width="6" height="17" fill="#9a9a9a"/>
<g fill="#fff"><rect x="789" y="8" width="2" height="1"/><rect x="789" y="10" width="3.2" height="1"/><rect x="789" y="12" width="2" height="1"/><rect x="789" y="14" width="3.2" height="1"/><rect x="789" y="16" width="2" height="1"/><rect x="789" y="18" width="3.2" height="1"/><rect x="789" y="20" width="2" height="1"/><rect x="789" y="22" width="3.2" height="1"/></g>
<!-- gauge -->
<path d="M812.6 20.9C812 19.5 812 18.6 812 17.5C812 13.3 815.4 9.9 819.55 9.9C823.7 9.9 827.1 13.3 827.1 17.5C827.1 18.6 827.1 19.5 826.5 20.9Z" fill="#9a9a9a"/>
<path d="M818.4 17.6L823.7 13.1" stroke="#fff" stroke-width="1.4" stroke-linecap="round"/>
<!-- camera -->
<path d="M841.1 11H845.4L846.6 9.4C846.9 9.1 847.2 9 847.6 9H851.4C851.8 9 852.1 9.1 852.4 9.4L853.6 11H858V21.7H841.1Z" fill="#9a9a9a"/>
<path d="M849.6 12.3C849.9 14.9 850.9 16 854.3 16.4C850.9 16.8 849.9 17.9 849.6 20.8C849.3 17.9 848.3 16.8 844.7 16.4C848.3 16 849.3 14.9 849.6 12.3Z" fill="#fff"/>
<circle cx="849.6" cy="16.4" r="0.8" fill="#777"/>
<text x="869" y="20" font-size="12" fill="#0a0a0a" opacity="0.99">Arms Spread</text>
<path d="M947.2 12.6L950.9 8.6L954.6 12.6M947.2 18.5L950.9 22.3L954.6 18.5" fill="none" stroke="#1c1c1c" stroke-width="1.5" stroke-linecap="round" stroke-linejoin="round"/>
<!-- faces -->
<g>
<!-- face 1 front -->
<circle cx="1120.9" cy="14.9" r="6.6" fill="#efefef" stroke="#707070" stroke-width="1.15"/>
<path d="M1114 16.4C1113.300 11.4 1116.400 7.800 1120.9 7.800C1125.400 7.800 1128.500 11.400 1127.800 16.400C1126.200 15 1124 12.800 1122.7 10.900C1121.1 13.200 1117.5 15.600 1114 16.400Z" fill="#555"/>
<ellipse cx="1118.2" cy="16.3" rx="1.4" ry="0.75" fill="#5a5a5a"/><ellipse cx="1123.7" cy="16.3" rx="1.4" ry="0.75" fill="#5a5a5a"/>
<!-- face 2 three-quarter -->
<circle cx="1145.3" cy="14.9" r="6.3" fill="#efefef" stroke="#707070" stroke-width="1.15"/>
<path d="M1139 13.4C1139.4 10 1142 8 1145.6 8C1148.6 8 1151 9.6 1152 12.2C1152.7 14.5 1152.4 17 1151.4 19.4C1151.6 16.6 1151.2 14.6 1150.2 12.6L1146.4 14.7C1144.4 14.2 1141.5 13.6 1139 13.4Z" fill="#555"/>
<path d="M1152 11.6C1154 10.5 1156.4 11.3 1157.2 14.2C1157.9 17 1157.8 20.2 1157.8 22.9C1155.6 22 1154.4 20.2 1153.9 17.8C1153.6 15.6 1153.4 13.4 1152 11.6Z" fill="#555"/>
<ellipse cx="1141.3" cy="16.1" rx="1.2" ry="0.6" fill="#666"/>
<!-- face 3 back -->
<circle cx="1174.8" cy="14.9" r="6.7" fill="#555" stroke="#6c6c6c" stroke-width="0.6"/>
<path d="M1168.4 16.4C1169.2 19.2 1171 20.6 1173 21.2M1181.2 16.4C1180.4 19.2 1178.6 20.6 1176.6 21.2" stroke="#e8e8e8" stroke-width="0.8" fill="none"/>
<path d="M1172.6 12.6C1172.6 10.4 1173.6 9.4 1175 9.4C1176.6 9.4 1177.5 10.5 1177.5 12.8C1177.5 16 1177 18.6 1176 20.8C1175 21.8 1173.6 22.6 1172.2 22.9C1173.6 20.6 1173.7 17.6 1173.4 14.6" fill="#555" stroke="#9c9c9c" stroke-width="0.6"/>
<!-- face 4 side with ponytail on left -->
<circle cx="1205.7" cy="14.9" r="6.3" fill="#efefef" stroke="#707070" stroke-width="1.15"/>
<path d="M1199.4 17.5C1198.7 13 1200.8 8.1 1205.9 8C1209.4 8 1212 10 1212 13L1208 13.4L1204.6 14.6L1203.4 12.6C1201.6 13.6 1200.6 15.4 1199.4 17.5Z" fill="#555"/>
<path d="M1199 11.5C1197 10.5 1194.7 11.3 1193.9 14.2C1193.2 17 1193.2 20.2 1193.2 22.9C1195.4 22 1196.6 20.2 1197.1 17.8C1197.4 15.6 1197.6 13.4 1199 11.5Z" fill="#555"/>
<ellipse cx="1209.7" cy="16.1" rx="1.2" ry="0.6" fill="#666"/>
<rect x="1218" y="4.4" width="1" height="21" fill="#dadada"/>
<!-- face 5 front with ponytail right -->
<circle cx="1232.7" cy="14.9" r="6.4" fill="#efefef" stroke="#707070" stroke-width="1.15"/>
<path d="M1225.7 13.6C1226 10 1229 8 1232.6 8C1236.2 8 1239 10.2 1239.4 13.8L1237 14C1235.8 13.2 1234.8 12.2 1234.2 11C1232.4 12.4 1229 13.4 1225.7 13.6Z" fill="#555"/>
<path d="M1240.4 10.2C1242.4 11 1243.6 13.6 1243.4 16.6C1243.2 19 1242.9 21.6 1242.8 23.8C1241 22.8 1240 21.4 1240.4 19.4C1241 16.6 1241.4 13.4 1240.4 10.2Z" fill="#555"/>
<ellipse cx="1228.7" cy="16.2" rx="1.1" ry="0.6" fill="#666"/><ellipse cx="1233.4" cy="16.2" rx="1.3" ry="0.6" fill="#555"/>
</g>
<path d="M1251.2 12.6L1254.9 8.6L1258.7 12.6M1251.2 18.3L1254.9 22.3L1258.7 18.3" fill="none" stroke="#1c1c1c" stroke-width="1.6" stroke-linecap="round" stroke-linejoin="round"/>
<!-- windows icon -->
<g fill="none" stroke="#444" stroke-width="1">
<path d="M1274.6 12.2V11.2H1282.4V17.2H1280.6"/><path d="M1274.1 10.7H1282.9" stroke-width="1.4"/>
<rect x="1271" y="16.3" width="7.6" height="6" fill="#f3f3f3"/><path d="M1270.5 15.9H1279.1" stroke-width="1.5"/>
</g>
</g>

<g id="sidetools">
<defs><linearGradient id="icg" x1="0" y1="0" x2="0" y2="1"><stop offset="0" stop-color="#5e5e5e"/><stop offset="1" stop-color="#8e8e8e"/></linearGradient></defs>
<!-- undo -->
<path d="M1295.4 16.8L1300.6 12.6V15.1C1303.4 15 1304.9 13.4 1304.5 11.2C1304.3 10.4 1303.8 9.7 1303.2 9.2C1305.9 9.4 1307.6 11.2 1307.5 13.6C1307.300 16.600 1304.6 18.4 1300.6 18.5V21Z" fill="url(#icg)"/>
<!-- redo -->
<path d="M1307.8 43.500L1302.600 39.300V41.800C1299.800 41.700 1298.300 40.100 1298.700 37.900C1298.900 37.100 1299.400 36.400 1300 35.900C1297.300 36.100 1295.600 37.900 1295.700 40.300C1295.900 43.300 1298.600 45.100 1302.600 45.200V47.700Z" fill="url(#icg)"/>
<!-- up -->
<path d="M1301 62.900L1306.200 69.200H1302.600L1302 75H1300L1299.400 69.200H1295.800Z" fill="url(#icg)"/>
<!-- down -->
<path d="M1301 102.100L1306.200 95.800H1302.600L1302 90H1300L1299.400 95.800H1295.800Z" fill="url(#icg)"/>
<!-- zoom + -->
<circle cx="1299.500" cy="121.600" r="5.100" fill="#d4d4d4" stroke="#444" stroke-width="1.200"/>
<path d="M1296.600 121.600H1302.400M1299.500 118.700V124.500" stroke="#222" stroke-width="1.200"/>
<path d="M1303.600 125.300L1307.500 128.300" stroke="#444" stroke-width="2" stroke-linecap="round"/>
<!-- zoom - -->
<circle cx="1299.500" cy="148.400" r="5.100" fill="#d4d4d4" stroke="#444" stroke-width="1.200"/>
<path d="M1296.600 148.400H1302.400" stroke="#222" stroke-width="1.200"/>
<path d="M1303.600 152.100L1307.500 155.100" stroke="#444" stroke-width="2" stroke-linecap="round"/>
<!-- collapse -->
<g fill="#777">
<path d="M1294.700 171.200L1296 170.400L1298.200 172.800V170.600H1299.800V175.800H1294.600V174.200H1296.800Z"/>
<path d="M1308.400 171.200L1307.100 170.400L1304.900 172.800V170.600H1303.300V175.800H1308.500V174.200H1306.300Z"/>
<path d="M1294.700 183.600L1296 184.400L1298.200 182V184.200H1299.800V179H1294.600V180.600H1296.800Z"/>
<path d="M1308.400 183.600L1307.100 184.400L1304.900 182V184.200H1303.300V179H1308.500V180.600H1306.300Z"/>
</g>
</g>

</svg>
</body></html>
